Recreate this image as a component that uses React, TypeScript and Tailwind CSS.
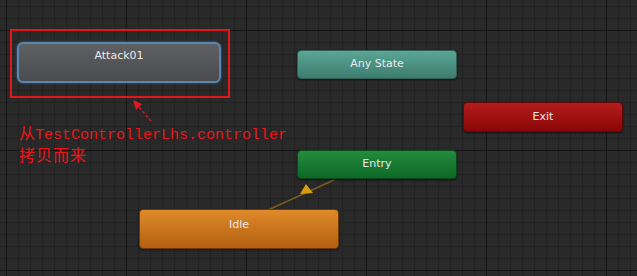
import React from "react";

function Grid() {
  return (
    <svg className="absolute inset-0" width={637} height={276}>
      <defs>
        <pattern id="minor" x={6} y={6} width={12} height={12} patternUnits="userSpaceOnUse">
          <rect x={0} y={0} width={1} height={12} fill="#222222" />
          <rect x={0} y={0} width={12} height={1} fill="#222222" />
        </pattern>
        <pattern id="major" x={6} y={30} width={120} height={120} patternUnits="userSpaceOnUse">
          <rect x={0} y={0} width={1} height={120} fill="#151515" />
          <rect x={0} y={0} width={120} height={1} fill="#151515" />
        </pattern>
      </defs>
      <rect width={637} height={276} fill="#292929" />
      <rect width={637} height={276} fill="url(#minor)" />
      <rect width={637} height={276} fill="url(#major)" />
    </svg>
  );
}

function Transition() {
  return (
    <svg className="absolute inset-0" width={637} height={276}>
      <line x1={334} y1={180} x2={268} y2={210} stroke="#7a5c1c" strokeWidth={1.5} />
      <polygon points="306,184 300,194 313,193" fill="#d99a12" />
    </svg>
  );
}

const label = "font-['DejaVu_Sans',sans-serif] text-[11px] text-[#e8e8e8]";

export default function App() {
  return (
    <div className="relative w-[637px] h-[276px] overflow-hidden bg-[#292929]">
      <Grid />
      <Transition />

      {/* Attack01 (selected) */}
      <div className="absolute left-[17px] top-[42px] w-[204px] h-[41px] rounded-[6px] border-2 border-[#5a86b2] shadow-[0_0_3px_#3d6a96] bg-linear-to-b from-[#5f6064] to-[#4a4b4e] flex justify-center pt-[4px]">
        <span className={label}>Attack01</span>
      </div>

      {/* Red highlight box */}
      <div className="absolute left-[10px] top-[29px] w-[220px] h-[69px] border-2 border-[#e3161c]" />

      {/* Red dashed arrow */}
      <svg className="absolute inset-0 pointer-events-none" width={637} height={276}>
        <line x1={151} y1={121} x2={139} y2={107} stroke="#d8141a" strokeWidth={1.5} strokeDasharray="3 2" />
        <polygon points="133,100 142,104 136,110" fill="#e3161c" />
      </svg>

      {/* Annotation */}
      <div className="absolute left-[19px] top-[123px] text-[#e8161a] text-[15px] leading-[18px] font-['Liberation_Mono','Noto_Sans_CJK_SC',monospace]">
        <div>
          <span className="font-['Noto_Sans_CJK_SC',sans-serif] text-[16px]">从</span>TestControllerLhs.controller
        </div>
        <div className="font-['Noto_Sans_CJK_SC',sans-serif] text-[16px] tracking-[1px]">拷贝而来</div>
      </div>

      {/* Any State */}
      <div className="absolute left-[297px] top-[50px] w-[160px] h-[29px] rounded-[4px] border border-[#2e5e54] shadow-[0_1px_2px_rgba(0,0,0,0.6)] bg-linear-to-b from-[#5aa696] to-[#3d7c6e] flex items-center justify-center">
        <span className={label}>Any State</span>
      </div>

      {/* Exit */}
      <div className="absolute left-[463px] top-[102px] w-[160px] h-[30px] rounded-[4px] border border-[#5e0808] shadow-[0_1px_2px_rgba(0,0,0,0.6)] bg-linear-to-b from-[#b41c1c] to-[#8a0606] flex items-center justify-center">
        <span className={label}>Exit</span>
      </div>

      {/* Entry */}
      <div className="absolute left-[297px] top-[150px] w-[160px] h-[29px] rounded-[4px] border border-[#0c4a1c] shadow-[0_1px_2px_rgba(0,0,0,0.6)] bg-linear-to-b from-[#238c3e] to-[#0d6826] flex items-center justify-center">
        <span className={label}>Entry</span>
      </div>

      {/* Idle */}
      <div className="absolute left-[139px] top-[209px] w-[200px] h-[40px] rounded-[4px] border border-[#6e3c08] shadow-[0_1px_2px_rgba(0,0,0,0.6)] bg-linear-to-b from-[#e08a2a] to-[#b26010] flex justify-center pt-[7px]">
        <span className={label}>Idle</span>
      </div>
    </div>
  );
}
